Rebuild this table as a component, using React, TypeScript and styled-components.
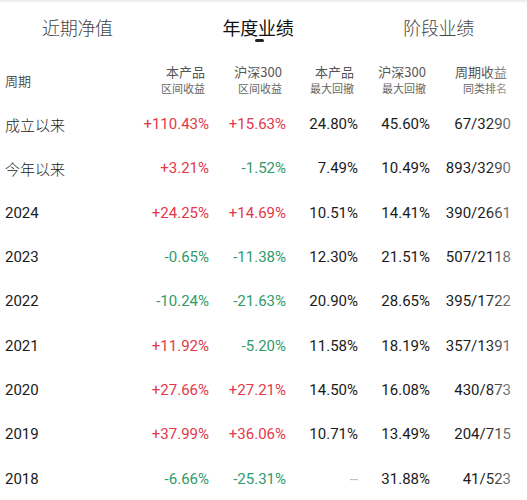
import React from 'react'
import styled, { createGlobalStyle } from 'styled-components'

const GlobalStyle = createGlobalStyle`
  html, body {
    margin: 0;
    padding: 0;
    background: #fff;
  }
  body {
    font-family: Roboto, "Noto Sans CJK SC", sans-serif;
  }
`

type Tone = 'up' | 'down' | 'plain' | 'muted'

interface IRow {
	label: string
	cn?: boolean
	fund: string
	index: string
	drawdown: string
	indexDrawdown: string
	rank: string
}

const rows: IRow[] = [
	{ label: '成立以来', cn: true, fund: '+110.43%', index: '+15.63%', drawdown: '24.80%', indexDrawdown: '45.60%', rank: '67/3290' },
	{ label: '今年以来', cn: true, fund: '+3.21%', index: '-1.52%', drawdown: '7.49%', indexDrawdown: '10.49%', rank: '893/3290' },
	{ label: '2024', fund: '+24.25%', index: '+14.69%', drawdown: '10.51%', indexDrawdown: '14.41%', rank: '390/2661' },
	{ label: '2023', fund: '-0.65%', index: '-11.38%', drawdown: '12.30%', indexDrawdown: '21.51%', rank: '507/2118' },
	{ label: '2022', fund: '-10.24%', index: '-21.63%', drawdown: '20.90%', indexDrawdown: '28.65%', rank: '395/1722' },
	{ label: '2021', fund: '+11.92%', index: '-5.20%', drawdown: '11.58%', indexDrawdown: '18.19%', rank: '357/1391' },
	{ label: '2020', fund: '+27.66%', index: '+27.21%', drawdown: '14.50%', indexDrawdown: '16.08%', rank: '430/873' },
	{ label: '2019', fund: '+37.99%', index: '+36.06%', drawdown: '10.71%', indexDrawdown: '13.49%', rank: '204/715' },
	{ label: '2018', fund: '-6.66%', index: '-25.31%', drawdown: '--', indexDrawdown: '31.88%', rank: '41/523' },
]

const tabs = ['近期净值', '年度业绩', '阶段业绩']
const active = 1

const columns = [
	['本产品', '区间收益'],
	['沪深300', '区间收益'],
	['本产品', '最大回撤'],
	['沪深300', '最大回撤'],
	['周期收益', '同类排名'],
]

const toneOf = (v: string): Tone => {
	if (v === '--') return 'muted'
	if (v.startsWith('+')) return 'up'
	if (v.startsWith('-')) return 'down'
	return 'plain'
}

export default function App() {
	return (
		<Page>
			<GlobalStyle />
			<TabBar>
				{tabs.map((t, i) => (
					<Tab key={t} $active={i === active}>
						{t}
						{i === active && <Indicator />}
					</Tab>
				))}
			</TabBar>

			<Table>
				<HeadLabel>周期</HeadLabel>
				{columns.map(([main, sub], i) => (
					<HeadCell key={i}>
						<HeadMain>{main}</HeadMain>
						<HeadSub>{sub}</HeadSub>
					</HeadCell>
				))}

				{rows.map(r => (
					<React.Fragment key={r.label}>
						<Label $cn={r.cn}>{r.label}</Label>
						<Value $tone={toneOf(r.fund)}>{r.fund}</Value>
						<Value $tone={toneOf(r.index)}>{r.index}</Value>
						<Value $tone={r.drawdown === '--' ? 'muted' : 'plain'}>{r.drawdown}</Value>
						<Value $tone="plain">{r.indexDrawdown}</Value>
						<Value $tone="plain">{r.rank}</Value>
					</React.Fragment>
				))}
			</Table>

			<EdgeFade />
		</Page>
	)
}

const Page = styled.div`
	position: relative;
	width: 527px;
	height: 500px;
	overflow: hidden;
	background: #fff;
	box-shadow: inset 0 3px 3px -2px rgba(0, 0, 0, 0.12);
`

const TabBar = styled.div`
	display: flex;
	justify-content: space-between;
	padding: 15px 53px 0 42px;
	height: 45px;
	box-sizing: border-box;
`

const Tab = styled.div<{ $active?: boolean }>`
	position: relative;
	font-family: "Noto Sans CJK SC", sans-serif;
	font-size: 18px;
	line-height: 24px;
	letter-spacing: -0.3px;
	color: ${p => (p.$active ? '#111' : '#444')};
	font-weight: ${p => (p.$active ? 400 : 300)};
`

const Indicator = styled.span`
	position: absolute;
	left: 50%;
	top: 24px;
	width: 9px;
	height: 3px;
	margin-left: -3px;
	border-radius: 2px;
	background: #222;
`

const Table = styled.div`
	display: grid;
	grid-template-columns: 125px 79px 77px 72px 72px 81px;
	grid-template-rows: 45px;
	grid-auto-rows: 44.3px;
	padding: 12px 16px 0 5px;
	align-items: center;
`

const HeadLabel = styled.div`
	font-family: "Noto Sans CJK SC", sans-serif;
	font-size: 13px;
	color: #555;
	padding-top: 2px;
`

const HeadCell = styled.div`
	display: flex;
	flex-direction: column;
	align-items: flex-end;
	padding-right: 4px;
	font-family: "Noto Sans CJK SC", sans-serif;
`

const HeadMain = styled.span`
	font-size: 13px;
	line-height: 16px;
	color: #555;
`

const HeadSub = styled.span`
	font-size: 11px;
	line-height: 16px;
	color: #666;
`

const Label = styled.div<{ $cn?: boolean }>`
	font-family: ${p => (p.$cn ? '"Noto Sans CJK SC", sans-serif' : 'Roboto, sans-serif')};
	font-size: 15px;
	color: #1b1b1b;
	font-weight: ${p => (p.$cn ? 300 : 400)};
`

const toneColor: Record<Tone, string> = {
	up: '#e5374a',
	down: '#2f9a6b',
	plain: '#1b1b1b',
	muted: '#bbb',
}

const Value = styled.div<{ $tone: Tone }>`
	text-align: right;
	font-family: Roboto, sans-serif;
	font-size: 15px;
	color: ${p => toneColor[p.$tone]};
`

const EdgeFade = styled.div`
	position: absolute;
	top: 50px;
	right: 0;
	bottom: 0;
	width: 40px;
	pointer-events: none;
	background: linear-gradient(to right, rgba(255, 255, 255, 0), rgba(255, 255, 255, 0.75));
`
